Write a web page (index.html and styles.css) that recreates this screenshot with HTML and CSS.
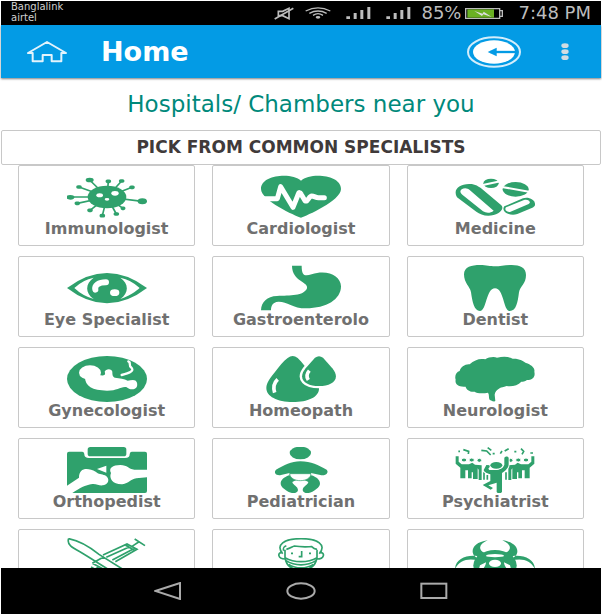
FILE: index.html
```html
<!DOCTYPE html>
<html lang="en">
<head>
<meta charset="utf-8">
<meta name="viewport" content="width=device-width, initial-scale=1">
<title>Home</title>
<link rel="stylesheet" href="styles.css">
</head>
<body>
<div class="app">
  <div class="status">
    <div class="carrier">Banglalink<br>airtel</div>
    <div class="indicators">
      <svg width="20" height="13" viewBox="0 0 60 39" fill="none" stroke="#bdbdbd" stroke-width="5"><path d="M13 13h13l19-9v31l-19-9H13z"/><path d="M2 36 58 4"/></svg>
      <svg class="wifi" width="26" height="12" viewBox="0 0 78 36" fill="none" stroke="#bdbdbd" stroke-width="4"><path d="M2 12Q39-7 76 12M13 19Q39 5 65 19M24 25Q39 15 54 25"/><ellipse cx="39" cy="31" rx="7" ry="4" fill="#bdbdbd" stroke="none"/></svg>
      <svg class="signal" width="25" height="12" viewBox="0 0 75 36" fill="#bdbdbd"><path d="M1 28h11v8H1zM23 18h9v18h-9zM43 9h9v27h-9zM64 0h9v36h-9z"/></svg>
      <svg class="signal" width="25" height="12" viewBox="0 0 75 36" fill="#bdbdbd"><path d="M1 28h11v8H1zM23 18h9v18h-9zM43 9h9v27h-9zM64 0h9v36h-9z"/></svg>
      <span>85%</span>
      <svg class="battery" width="38" height="11" viewBox="0 0 114 33"><path d="M2 2h102v29H2zM106 8h6v17h-6" fill="none" stroke="#bdbdbd" stroke-width="4"/><path d="M7 4h80v25H7z" fill="#6ab023"/><path d="m28 9 25 8 3-6 24 16-25-8-4 5z" fill="#ddd"/></svg>
      <span>7:48 PM</span>
    </div>
  </div>
  <header class="bar">
    <button class="plain home" aria-label="Home"><svg width="40" height="22" viewBox="0 0 120 66" fill="none" stroke="#e3f3fc" stroke-width="6" stroke-linejoin="round"><path d="M60 3 3 36h14v25h30V42h27v19h29V36h14z"/></svg></button>
    <h1>Home</h1>
    <button class="plain" aria-label="Sign out"><svg width="54" height="32" viewBox="0 0 162 96"><ellipse cx="81" cy="48" rx="78" ry="44" fill="none" stroke="#d4edfb" stroke-width="6"/><ellipse cx="81" cy="48" rx="63" ry="35" fill="#fff"/><path d="M70 48h76" stroke="#039be5" stroke-width="7"/><path d="m62 48 27-13v26z" fill="#039be5"/></svg></button>
    <button class="plain more" aria-label="More options"><svg width="8" height="18" viewBox="0 0 24 54" fill="#d0dce2"><ellipse cx="12" cy="8" rx="11" ry="7"/><ellipse cx="12" cy="26" rx="11" ry="7"/><ellipse cx="12" cy="44" rx="11" ry="7"/></svg></button>
  </header>
  <main>
    <a class="near" href="#">Hospitals/ Chambers near you</a>
    <h2>PICK FROM COMMON SPECIALISTS</h2>
    <div class="grid">
      <button class="card">
        <svg viewBox="0 0 240 138"><path d="m120 69-52-51M120 69l4-47M120 69l44-48M120 69 36 39M120 69l75-29M120 69H10M120 69l106 13M120 69 31 88M120 69l-51 40M120 69l-14 56M120 69l28 51M120 69l48 34" class="line"/><ellipse cx="120" cy="69" rx="58" ry="34"/><ellipse cx="68" cy="18" rx="12" ry="7"/><ellipse cx="10" cy="70" rx="12" ry="7"/><ellipse cx="226" cy="82" rx="14" ry="9"/><g class="dots"><path d="M121 22h6M161 21h6M33 39h6M192 40h6M28 88h6M66 109h6M103 125h6M145 120h6M166 103h4"/></g><g class="cut"><ellipse cx="98" cy="64" rx="10" ry="6"/><ellipse cx="144" cy="58" rx="11" ry="7"/><ellipse cx="120" cy="76" rx="7" ry="4"/></g></svg>
        <span>Immunologist</span>
      </button>
      <button class="card">
        <svg viewBox="0 0 240 138"><path d="M120 131C104 126 0 80 0 45 0 2 92-5 120 20 148-5 240 2 240 45c0 35-104 81-120 86z"/><path class="cutline" stroke-width="15" stroke-linecap="round" d="M4 74h45l10-36 37 62 16-40c2-6 6-5 8 0l12 20c8 6 12-14 20-14 9 0 12 6 22 5h16"/></svg>
        <span>Cardiologist</span>
      </button>
      <button class="card">
        <svg viewBox="0 0 240 138"><path d="M6 70C-7 47 12 29 45 30c15 0 27 8 36 15l58 49c12 12-12 31-39 31-15 0-27-6-36-12z"/><path class="cut" d="M20 46c8-6 18-4 24 2l72 62c-10 8-22 8-32 2L22 62c-7-6-8-11-2-16z"/><path d="m148 97 56-24c18-6 38 6 36 20-1 4-4 6-8 8l-45 19c-26 8-50-10-39-23z"/><path class="cut" d="m153 100 54-22c14-3 22 6 14 12l-56 24c-12 0-17-8-12-14z"/><ellipse cx="108" cy="28" rx="23" ry="14"/><ellipse cx="182" cy="46" rx="39" ry="22"/><path class="cutline" stroke-width="6" d="m80 34 56-12M136 38l90 16"/></svg>
        <span>Medicine</span>
      </button>
      <button class="card">
        <svg viewBox="0 0 240 138"><path d="M0 69Q60 24 120 24t120 45q-60 46-120 46T0 69z"/><path class="cut" d="M22 69Q48 44 80 38c-26 18-26 46 0 64Q46 92 22 69zM218 69Q192 44 160 38c26 18 26 46 0 64 34-10 58-33 58-33z"/><path class="cutline" stroke-width="18" stroke-linecap="round" d="M85 74c-3-13 9-22 32-22"/><ellipse class="cut" cx="143" cy="83" rx="14" ry="10"/></svg>
        <span>Eye Specialist</span>
      </button>
      <button class="card">
        <svg viewBox="0 0 240 138"><path d="M93 2h29c0 29 8 33 30 26 48-16 88 6 88 36 0 39-43 66-105 66-40 0-58-21-83-20-17 1-22 13-22 26H0c1-25 18-42 48-43 40-2 80 1 90-23 6-20-45-20-45-68z"/></svg>
        <span>Gastroenterolo</span>
      </button>
      <button class="card">
        <svg viewBox="0 0 240 138"><path d="M27 28C27 5 50 0 75 0c20 0 30 4 45 4s30-4 50-4c25 0 43 8 43 30 0 27-18 34-21 52-4 30-8 56-28 56-19 0-17-68-44-68s-25 68-45 68c-18 0-23-28-27-56-3-18-21-27-21-54z"/></svg>
        <span>Dentist</span>
      </button>
      <button class="card">
        <svg viewBox="0 0 240 138"><ellipse cx="120" cy="69" rx="120" ry="69"/><g class="cut"><ellipse cx="69" cy="50" rx="33" ry="22"/><path d="M54 64c0 26 22 40 66 40 30 0 38-10 54-11 8 0 10 7 20 7 16-1 18-10 16-20-4-12-16-8-28-6-10-6-24-7-38-9-6-2-8-6-8-18-1-10-20-10-23 0 4 10-2 12-13 11z"/></g><path class="cutline" stroke-width="7" stroke-linecap="round" d="M184 16c10 3-2 12 10 20 8 10-8 15-30 21"/></svg>
        <span>Gynecologist</span>
      </button>
      <button class="card">
        <svg viewBox="0 0 240 138"><path d="M80 6q15-12 30 0c14 14 26 30 40 48 17 18 24 29 24 44 0 25-34 40-78 40-48 0-80-17-80-42 0-17 13-31 26-48C56 30 66 16 80 6z"/><path stroke="#fff" stroke-width="14" paint-order="stroke" d="M162 5q12-9 24 0l28 32c27 33-1 53-40 53s-67-20-40-53z"/><path class="cutline" stroke-width="11" d="M50 70c-13 12-14 24-9 40M145 44c-7 8-10 18-3 28"/></svg>
        <span>Homeopath</span>
      </button>
      <button class="card">
        <svg viewBox="0 0 240 138"><path d="M2 71c-4-12 2-24 12-26 2-12 18-22 30-20C58 12 74 6 91 10c9-7 27-9 35-5 20-4 36-3 47 3 20-1 33 7 40 13 15 4 28 16 25 26 4 16-6 25-22 25-7 5-12 5-17 5-10 12-28 15-44 13-11 4-16 4-20 6-10 6-15 12-16 20l2 19c-3 4-17-2-18-5-2-6 0-14-4-20-16 3-34 2-40-3-14 2-26-7-27-15C9 94-1 84 2 71z"/></svg>
        <span>Neurologist</span>
      </button>
      <button class="card">
        <svg viewBox="0 0 240 138"><rect x="62" width="116" height="28" rx="8"/><path d="M0 20q0-6 6-6h40q6 0 6 8c0 8 5 11 14 11h108c10 0 14-3 14-11q0-8 6-8h40q6 0 6 6v112q0 6-6 6H0z"/><g class="cut"><path d="m0 116 36-24c0-32 28-30 50-18 8 8 18 6 28 11 16 9 12 28-6 30-12 2-18-5-32-4-22 4-38 12-60 27H0zM90 66l28-10v21zM240 68h-38c-18-2-20-14-42-14-23 0-36 9-28 24-7 17 6 35 34 34 20-2 24-16 42-18l32-3z"/></g></svg>
        <span>Orthopedist</span>
      </button>
      <button class="card">
        <svg viewBox="0 0 240 138"><ellipse cx="118" cy="18" rx="32" ry="19"/><path d="M118 43c-28 0-48 12-73 25-8 8 0 19 15 16l26-6v22h64V78l28 6c16 4 27-8 19-16-25-13-46-25-79-25z"/><path d="M84 85c-25 9-34 28-14 41 16 14 34 16 40 7 5-14-14-17-16-28l16-8zM152 85c25 9 34 28 14 41-16 14-34 16-40 7-5-14 14-17 16-28l-16-8z"/><path d="M86 80h64c-2 28-62 28-64 0z" fill="#fff" stroke="#2fa16c" stroke-width="2"/></svg>
        <span>Pediatrician</span>
      </button>
      <button class="card">
        <svg viewBox="0 0 240 138"><path d="M2 28h9v16l9 8h22l10-5 8 6 20 2v44h-9V68l-3-4v32H54V76h-4v18H39V70h-8v24H16V62L2 50zM238 28h-9v16l-9 8h-22l-10-5-8 6-20 2v44h9V68l3-4v32h14V76h4v18h11V70h8v24h15V62l14-12z"/><g class="heads"><ellipse cx="27" cy="39" rx="8" ry="6"/><ellipse cx="50" cy="39" rx="8" ry="6"/><ellipse cx="73" cy="40" rx="7" ry="6"/><ellipse cx="213" cy="39" rx="8" ry="6"/><ellipse cx="190" cy="39" rx="8" ry="6"/><ellipse cx="167" cy="40" rx="7" ry="6"/></g><path class="line" d="M87 76v22M97 84v14M153 76v22M10 13h5M25 8l16 5-1 8M79 10l16 2 12 12M98 2l11 8M113 20h6M136 20l5-8M149 12l12-7M178 14h6M198 5l8 8-5 9M226 18h8"/><g stroke="#fff" stroke-width="6" paint-order="stroke"><path d="M94 54 86 69c2 8 14 11 20 13v20L83 114l24 14 7-5-14-8 25-8v28c2 5 13 5 16 0V78c12-8 20-16 20-26V33c-1-6-11-6-13 0v20c-4 11-14 16-28 16h-17l-3-4 8-10z"/><ellipse cx="124" cy="55" rx="18" ry="10"/></g></svg>
        <span>Psychiatrist</span>
      </button>
      <button class="card" aria-label="Surgeon">
        <svg viewBox="0 0 240 138"><path class="line" d="M5 2c38 7 66 27 91 47l115 72M5 2C-2 20 18 30 40 42c45 27 72 46 124 76M108 51l72-33 30 16-65 37M76 76l35-20M76 76l46 24M118 58l70-32M136 66l67-35M176 22l26 15M72 87l36 20M76 98l18-10M195 25l20-13M203 3l31 20"/></svg>
      </button>
      <button class="card" aria-label="Dermatologist">
        <svg viewBox="0 0 240 138"><path class="line" d="M65 47C42 20 70 2 120 2s78 18 55 45M76 34c12-3 18-8 24-10 22 4 42 2 52 2 6 6 8 7 16 8M72 35v23c4 30 25 38 48 38s44-10 48-38V35M72 59c28 16 68 16 96 0M74 67c28 18 64 18 92 0M83 79c22 14 52 14 74 0M64 43c-16 0-14 20 8 20M176 43c18 0 14 20-8 20M90 46h6M144 46h6M122 39v17h-9M76 23c-10 4-10 8-8 15"/></svg>
      </button>
      <button class="card" aria-label="Oncologist">
        <svg viewBox="0 0 240 138"><path d="M98 7C45 14 42 52 72 62l16-18C68 34 72 18 98 7zM142 7c53 7 56 45 26 55l-16-18c20-10 16-26-10-37zM0 94c0-28 30-44 66-40l6 14C38 58 10 68 0 94zM240 94c0-28-30-44-66-40l-6 14c34-10 62 0 72 26z"/><ellipse cx="120" cy="82" rx="65" ry="46"/><g class="cut"><ellipse cx="120" cy="53" rx="27" ry="5"/><ellipse cx="120" cy="76" rx="18" ry="11"/><path d="m72 92 3-10 18-9c0 10-8 18-13 25zM168 92l-3-10-18-9c0 10 8 18 13 25z"/></g></svg>
      </button>
    </div>
  </main>
  <nav>
    <button class="plain" aria-label="Back"><svg width="28" height="18" viewBox="0 0 84 54"><path d="M4 27 78 3v48z"/></svg></button>
    <button class="plain" aria-label="Home screen"><svg width="30" height="18" viewBox="0 0 90 54"><ellipse cx="45" cy="27" rx="41" ry="23"/></svg></button>
    <button class="plain" aria-label="Recent apps"><svg width="28" height="18" viewBox="0 0 84 54"><rect x="4" y="5" width="75" height="43"/></svg></button>
  </nav>
</div>
</body>
</html>
```
FILE: styles.css
```css
* { box-sizing: border-box; }

body {
  margin: 0;
  background: #fff;
  font-family: "DejaVu Sans", Verdana, sans-serif;
}

svg { display: block; flex: none; }

.app {
  display: flex;
  flex-direction: column;
  height: 100vh;
  padding: 1px;
}

.plain {
  display: flex;
  align-items: center;
  justify-content: center;
  padding: 0;
  border: 0;
  background: none;
}

.status {
  display: flex;
  flex: none;
  justify-content: space-between;
  height: 24px;
  padding: 0 10px;
  background: #000;
  color: #d0d0d0;
}

.carrier {
  font-size: 10px;
  line-height: 11px;
}

.indicators {
  display: flex;
  align-items: center;
  font-size: 18px;
  line-height: 24px;
  color: #bdbdbd;
}

.wifi { margin-left: 11px; }
.signal { margin-left: 15px; }
.signal + span { margin-left: 10px; }
.battery { margin: 0 15px 0 4px; }

.bar {
  position: relative;
  display: flex;
  flex: none;
  align-items: center;
  height: 53px;
  padding: 0 32px 0 26px;
  background: #039be5;
  box-shadow: 0 1px 2px rgba(0, 0, 0, .5);
}

.bar h1 {
  flex: 1;
  margin: 0 0 0 34px;
  color: #fff;
  font-size: 27px;
  line-height: 32px;
}

.more { margin-left: 40px; }

main {
  flex: 1;
  min-height: 0;
  overflow: hidden;
}

.near {
  display: block;
  color: #00897b;
  font-size: 23px;
  line-height: 52px;
  text-align: center;
  text-decoration: none;
}

h2 {
  margin: 0;
  border: 1px solid #c8c8c8;
  border-radius: 2px;
  color: #403a3a;
  font-size: 17px;
  line-height: 33px;
  text-align: center;
}

.grid {
  display: grid;
  grid-template-columns: repeat(3, 1fr);
  gap: 10px 17px;
  padding: 0 17px;
}

.card {
  display: flex;
  flex-direction: column;
  align-items: center;
  min-width: 0;
  padding: 8px 0 7px;
  border: 1px solid #c8c8c8;
  border-radius: 2px;
  background: #fff;
  color: #707070;
  font: bold 16px/18px "DejaVu Sans", Verdana, sans-serif;
}

.card svg {
  width: 80px;
  height: 46px;
  fill: #2fa16c;
}

.card .line {
  fill: none;
  stroke: #2fa16c;
  stroke-width: 5px;
}

.card .dots {
  stroke: #2fa16c;
  stroke-width: 11px;
  stroke-linecap: round;
}

.card .heads {
  stroke: #fff;
  stroke-width: 3px;
}

.card .cut { fill: #fff; }

.card .cutline {
  fill: none;
  stroke: #fff;
  stroke-linejoin: round;
}

nav {
  display: flex;
  flex: none;
  align-items: center;
  justify-content: center;
  gap: 53px;
  height: 46px;
  background: #000;
}

nav button { width: 80px; height: 46px; }

nav svg {
  fill: none;
  stroke: #aaa;
  stroke-width: 6px;
}
```
